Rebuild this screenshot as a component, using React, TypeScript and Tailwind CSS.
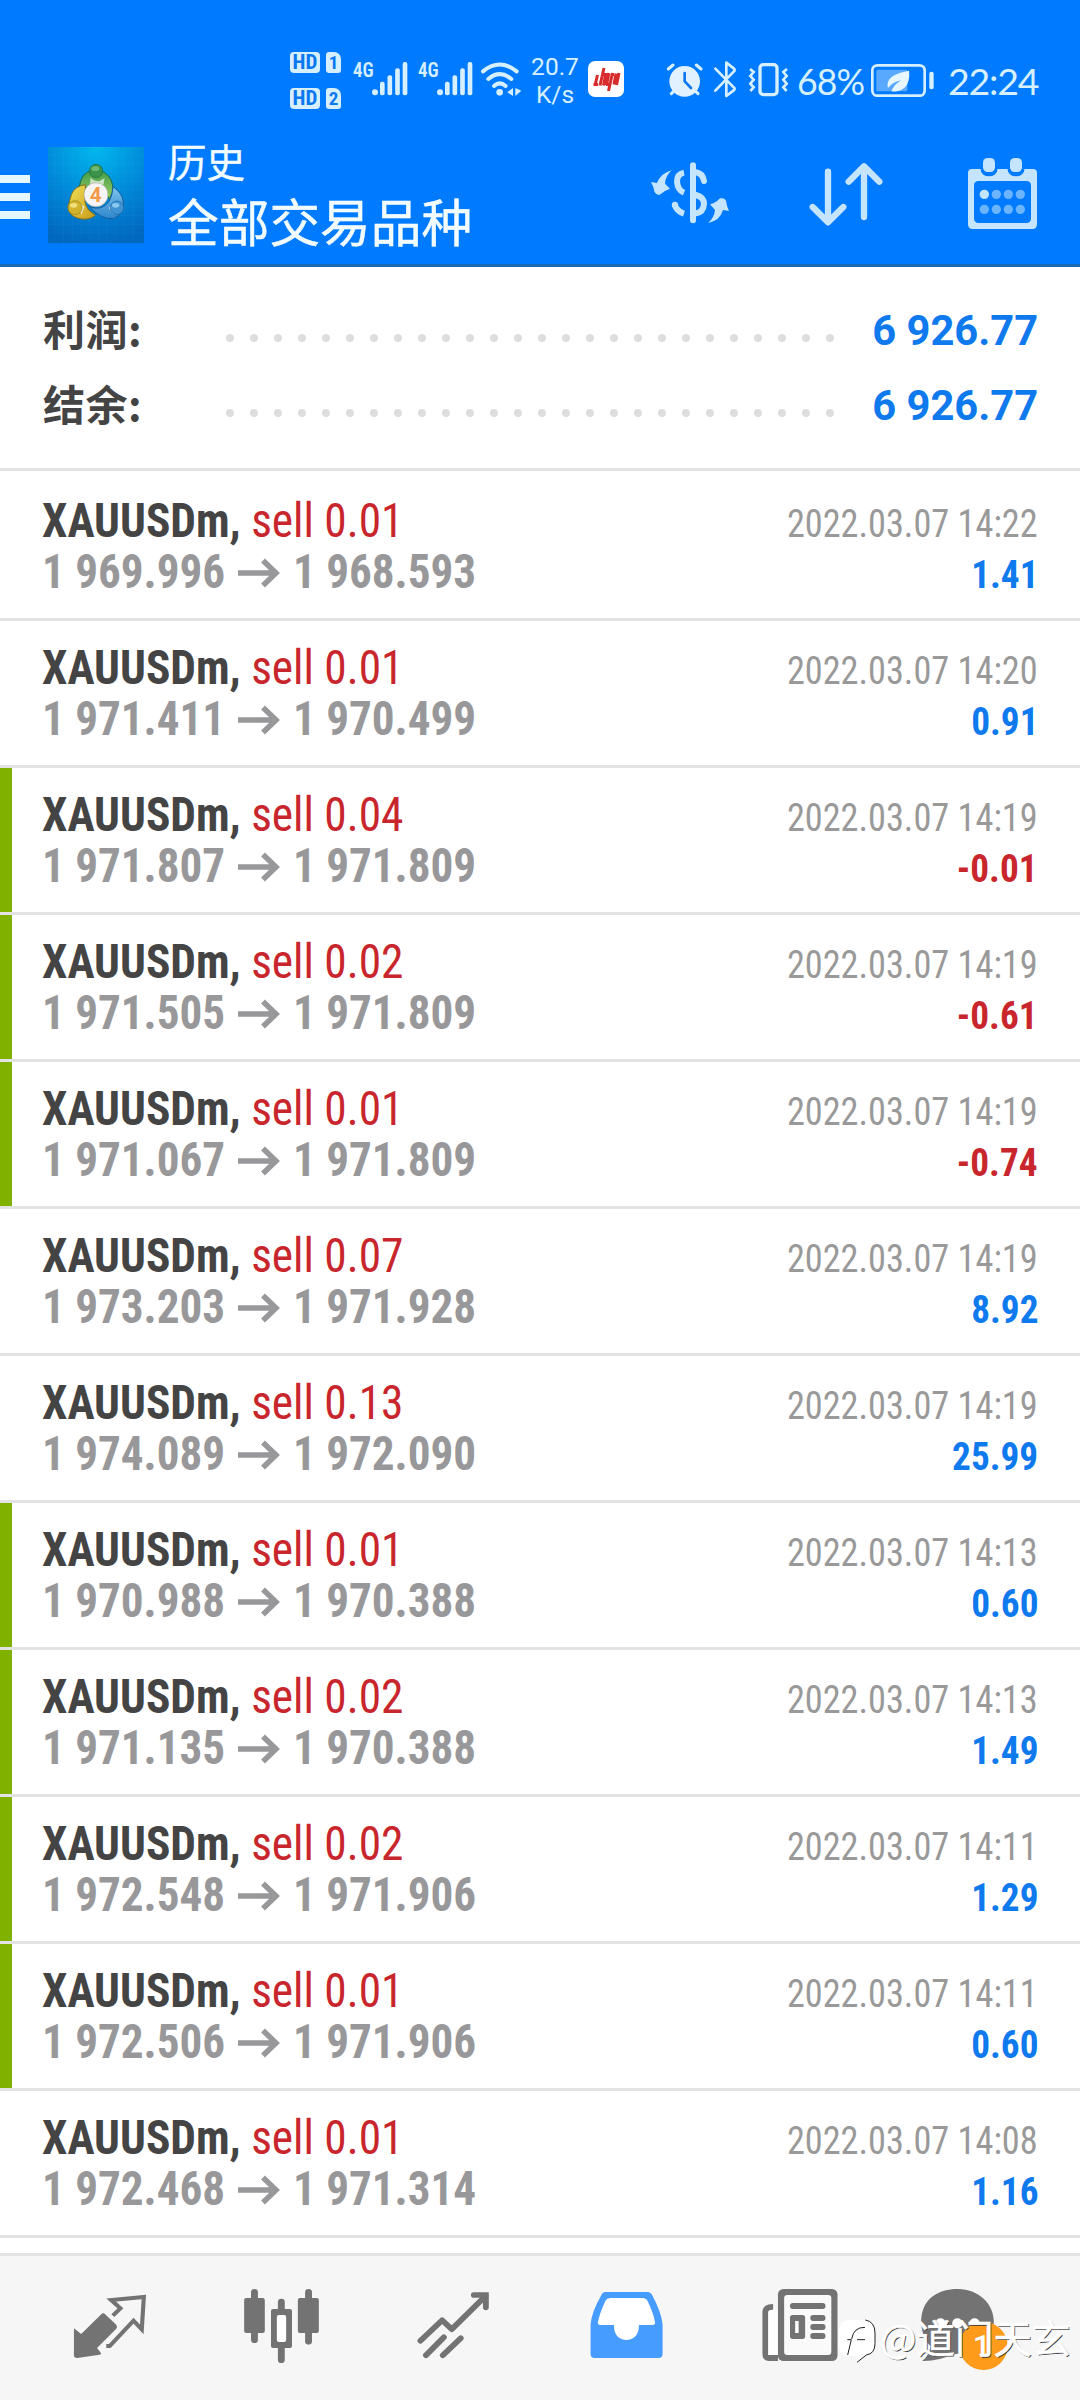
type Deal = {
  lot: string;
  from: string;
  to: string;
  time: string;
  profit: string;
  marked?: boolean;
};

const deals: Deal[] = [
  { lot: "0.01", from: "1 969.996", to: "1 968.593", time: "14:22", profit: "1.41" },
  { lot: "0.01", from: "1 971.411", to: "1 970.499", time: "14:20", profit: "0.91" },
  { lot: "0.04", from: "1 971.807", to: "1 971.809", time: "14:19", profit: "-0.01", marked: true },
  { lot: "0.02", from: "1 971.505", to: "1 971.809", time: "14:19", profit: "-0.61", marked: true },
  { lot: "0.01", from: "1 971.067", to: "1 971.809", time: "14:19", profit: "-0.74", marked: true },
  { lot: "0.07", from: "1 973.203", to: "1 971.928", time: "14:19", profit: "8.92" },
  { lot: "0.13", from: "1 974.089", to: "1 972.090", time: "14:19", profit: "25.99" },
  { lot: "0.01", from: "1 970.988", to: "1 970.388", time: "14:13", profit: "0.60", marked: true },
  { lot: "0.02", from: "1 971.135", to: "1 970.388", time: "14:13", profit: "1.49", marked: true },
  { lot: "0.02", from: "1 972.548", to: "1 971.906", time: "14:11", profit: "1.29", marked: true },
  { lot: "0.01", from: "1 972.506", to: "1 971.906", time: "14:11", profit: "0.60", marked: true },
  { lot: "0.01", from: "1 972.468", to: "1 971.314", time: "14:08", profit: "1.16" },
];

function HdBadge({ n }: { n: string }) {
  return (
    <div className="flex h-[22px] items-center gap-[6px] font-['Roboto_Condensed'] font-bold text-[#0a78f0]">
      <span className="flex h-[21px] w-[30px] items-center justify-center rounded-[4px] bg-[#d6efff] text-[21px] leading-[21px]">
        HD
      </span>
      <span className="flex h-[21px] w-[15px] items-center justify-center rounded-[3px] rounded-tr-[7px] bg-[#d6efff] text-[19px] leading-[21px]">
        {n}
      </span>
    </div>
  );
}

function Signal() {
  return (
    <div className="flex h-[34px] items-start">
      <span className="w-[19px] origin-left scale-x-[0.95] font-['Roboto_Condensed'] text-[20px] leading-[16px] font-semibold">
        4G
      </span>
      <svg className="h-[34px] w-[36px]" viewBox="302 98 108 102" fill="currentColor">
        <circle cx="311" cy="189" r="9" />
        <rect x="326" y="157" width="14" height="41" rx="6" />
        <rect x="348.500" y="138" width="14" height="60" rx="6" />
        <rect x="371.500" y="117" width="14" height="81" rx="6" />
        <rect x="394" y="98" width="14" height="100" rx="6" />
      </svg>
    </div>
  );
}

function StatusBar() {
  return (
    <div className="flex h-[130px] items-start text-[#d6f0ff]">
      <div className="mt-[51px] ml-[290px] flex w-[63px] shrink-0 flex-col gap-[14px]">
        <HdBadge n="1" />
        <HdBadge n="2" />
      </div>
      <div className="mt-[62px] w-[65px] shrink-0">
        <Signal />
      </div>
      <div className="mt-[62px] w-[62px] shrink-0">
        <Signal />
      </div>
      <svg className="mt-[62px] h-[36px] w-[44px] shrink-0" viewBox="632 96 132 108" fill="none" stroke="currentColor" strokeWidth="12" strokeLinecap="round">
        <path d="M641 124Q691 83 742 124" />
        <path d="M657 147Q691 118 726 147" />
        <path d="M674 168Q691 152 709 168" />
        <circle cx="691" cy="187" r="10" fill="currentColor" stroke="none" />
        <path d="M714 187L731 174V198ZM738 174L756 182 738 198Z" fill="currentColor" stroke="none" />
      </svg>
      <div className="mt-[53px] ml-[6px] flex w-[50px] shrink-0 flex-col items-center font-['Roboto'] text-[24.500px] leading-[28px]">
        <span>20.7</span>
        <span>K/s</span>
      </div>
      <svg className="mt-[61px] ml-[8px] h-[36px] w-[36px] shrink-0 rounded-[7px] bg-white" viewBox="0 0 36 36" fill="none" stroke="#d82b2b" strokeWidth="3">
        <path d="M7 24.500L9.500 14M5.500 23.500H10M12 24.500L16 7M15.500 24.500L18 12.500M14 13.500H21M18.500 24L21 12M20.500 30L24.500 12M18 23.500H23M26 23.500L28 12.500M28.500 24L31 12M23 13.500H26" />
      </svg>
      <svg className="mt-[62px] ml-[42px] h-[36px] w-[37px] shrink-0" viewBox="78 96 111 108" fill="none" stroke="currentColor" strokeWidth="9" strokeLinecap="round">
        <circle cx="134" cy="154" r="46" fill="#e2f1ff" stroke="none" />
        <path d="M85 117L99 105M183 117L169 105" />
        <path d="M101 184L94 191M167 184L174 191" />
        <path d="M134 129V154L153 174" stroke="#0a78f0" strokeWidth="8" />
      </svg>
      <svg className="mt-[60px] ml-[10px] h-[40px] w-[25px] shrink-0" viewBox="219 90 75 120" fill="none" stroke="currentColor" strokeWidth="8" strokeLinejoin="round" strokeLinecap="round">
        <path d="M226 116L281 172Q287 177 281 181L259 198V98L281 115Q287 120 281 125L226 182" />
      </svg>
      <svg className="mt-[61px] ml-[10px] h-[38px] w-[42px] shrink-0" viewBox="324 92 126 114" fill="none" stroke="currentColor" strokeWidth="8">
        <rect x="360" y="103" width="51" height="90" rx="10" strokeWidth="10" />
        <path d="M330 116L341 125 331 137 341 148 331 160 341 171 331 182M441 116L430 125 440 137 430 148 440 160 430 171 440 182" strokeWidth="8" />
      </svg>
      <span className="mt-[60px] ml-[7px] w-[74px] shrink-0 origin-left scale-x-[0.95] font-['Lato'] text-[37.500px] leading-[42px] tracking-[-1px]">
        68%
      </span>
      <svg className="mt-[63px] h-[36px] w-[64px] shrink-0" viewBox="697 99 192 108" fill="none">
        <rect x="701" y="106" width="157" height="91" rx="15" stroke="currentColor" strokeWidth="8" />
        <rect x="713" y="119" width="93" height="65" rx="5" fill="#58a9ff" />
        <rect x="872" y="125" width="13" height="53" rx="6" fill="currentColor" />
        <path d="M748 174C740 140 777 129 811 122C815 156 802 188 758 184C767 165 776 157 789 151C770 154 757 162 748 174Z" fill="#e8f6ff" />
      </svg>
      <span className="mt-[60px] ml-[13px] shrink-0 origin-left font-['Lato'] text-[37.500px] leading-[42px] tracking-[-1.200px]">
        22:24
      </span>
    </div>
  );
}

function AppLogo() {
  return (
    <svg className="h-24 w-24" viewBox="24 21 288 288">
      <defs>
        <radialGradient id="sky" cx="0.5" cy="0" r="1">
          <stop offset="0" stopColor="#00b8ee" />
          <stop offset="0.55" stopColor="#0088d8" />
          <stop offset="1" stopColor="#0068bf" />
        </radialGradient>
        <linearGradient id="green" x1="0" y1="0" x2="0" y2="1">
          <stop offset="0" stopColor="#3f9a50" />
          <stop offset="1" stopColor="#9cd05c" />
        </linearGradient>
        <linearGradient id="gold" x1="0" y1="0" x2="1" y2="1">
          <stop offset="0" stopColor="#f2e259" />
          <stop offset="1" stopColor="#c99a18" />
        </linearGradient>
        <linearGradient id="azure" x1="0" y1="0" x2="0" y2="1">
          <stop offset="0" stopColor="#7cc4ee" />
          <stop offset="1" stopColor="#2f86cc" />
        </linearGradient>
      </defs>
      <rect x="24" y="21" width="288" height="288" fill="url(#sky)" />
      <path
        d="M45 21V309M71 21V309M97 21V309M123 21V309M149 21V309M175 21V309M201 21V309M227 21V309M253 21V309M279 21V309M24 45H312M24 71H312M24 97H312M24 123H312M24 149H312M24 175H312M24 201H312M24 227H312M24 253H312M24 279H312"
        stroke="#5fc3ff"
        strokeOpacity="0.12"
        strokeWidth="2"
      />
      <path d="M118 140Q124 100 152 92Q182 84 204 106Q219 122 219 152L208 178 194 150Q170 116 144 142Z" fill="url(#green)" stroke="#1d6b4a" strokeWidth="3" />
      <path d="M136 134Q104 138 94 164L84 200Q86 226 112 234Q144 244 166 226L146 210Q130 190 136 160Z" fill="url(#gold)" stroke="#83701c" strokeWidth="3" />
      <path d="M219 140Q248 160 250 186Q254 222 220 236Q184 240 148 200Q184 214 206 186Q218 166 219 140Z" fill="url(#azure)" stroke="#135c99" strokeWidth="3" />
      <path d="M152 112Q158 124 178 124L194 114L190 134H150ZM112 184L134 200 124 224ZM206 204L222 186 220 222Z" fill="#eef6ec" fillOpacity="0.75" />
      <circle cx="168" cy="93" r="20" fill="#3c9248" stroke="#1d6b3c" strokeWidth="2" />
      <ellipse cx="166" cy="86" rx="12" ry="7" fill="#86c98a" fillOpacity="0.7" />
      <circle cx="105" cy="203" r="21" fill="#d3b22c" stroke="#94801c" strokeWidth="2" />
      <ellipse cx="101" cy="196" rx="11" ry="7" fill="#f7ec94" fillOpacity="0.8" />
      <circle cx="231" cy="203" r="20" fill="#3f93d2" stroke="#1a66a4" strokeWidth="2" />
      <ellipse cx="227" cy="196" rx="11" ry="7" fill="#9fd6f7" fillOpacity="0.8" />
      <circle cx="168" cy="164" r="36" fill="#f6f4f6" stroke="#a6ab98" strokeWidth="2" />
      <text x="167" y="186" textAnchor="middle" fontFamily="Roboto" fontWeight="700" fontSize="62" fill="#f39a4a">
        4
      </text>
    </svg>
  );
}

function Header() {
  return (
    <header className="h-[267px] shrink-0 border-b-[3px] border-[#1c69b4] bg-[#007bff]">
      <StatusBar />
      <div className="flex items-start text-[#f2fcff]">
        <div className="mt-[45px] flex w-[30px] flex-col gap-[10px]">
          <span className="h-2 bg-[#e6f8ff]" />
          <span className="h-2 bg-[#e6f8ff]" />
          <span className="h-2 bg-[#e6f8ff]" />
        </div>
        <div className="mt-[17px] ml-[18px]">
          <AppLogo />
        </div>
        <div className="ml-[24px] flex w-[452px] shrink-0 flex-col font-['Noto_Sans_CJK_SC',sans-serif]">
          <span className="mt-[8px] text-[38.500px] leading-[44px] [-webkit-text-stroke:0.4px_#f2fcff]">历史</span>
          <span className="mt-[10px] text-[50.700px] leading-[56px] [-webkit-text-stroke:0.5px_#f2fcff]">全部交易品种</span>
        </div>
        <svg className="h-[120px] w-[460px] shrink-0" viewBox="0 0 1380 360" fill="none" stroke="#c5e5ff" strokeLinecap="round">
          <g fill="#c5e5ff" stroke="none">
            <path d="M155 121Q136 138 135 161L150 176Q134 181 118 195Q106 194 103 184Q101 170 93 156L111 159Q122 130 155 121Z" />
            <path d="M264 279Q282 265 285 240L270 223Q286 220 300 205Q314 203 318 212Q320 228 327 243L309 240Q300 272 264 279Z" />
          </g>
          <path d="M219 106V271" strokeWidth="18" />
          <path d="M192 128Q171 132 171 155Q173 180 192 188M164 224Q170 244 192 251" strokeWidth="18" strokeLinecap="butt" />
          <circle cx="165" cy="225" r="9.500" fill="#c5e5ff" stroke="none" />
          <path d="M228 127Q248 130 252 153M228 195Q252 201 252 222Q250 247 228 250" strokeWidth="18" />
          <path d="M624 125V276M578 231L624 277 670 231M732 261V110M686 155L732 109 778 155" strokeWidth="19" strokeLinejoin="round" />
          <path d="M1056 117H1082V120A25 19 0 0 0 1132 120V117H1163V120A25 19 0 0 0 1213 120V117H1239Q1251 117 1251 129V283Q1251 297 1237 297H1058Q1044 297 1044 283V129Q1044 117 1056 117ZM1076 153Q1062 153 1062 167V265Q1062 279 1076 279H1219Q1233 279 1233 265V167Q1233 153 1219 153Z" fill="#c5e5ff" fillRule="evenodd" stroke="none" />
          <g fill="#c5e5ff" stroke="none">
            <rect x="1089" y="84" width="36" height="42" rx="14" />
            <rect x="1170" y="84" width="36" height="42" rx="14" />
            <circle cx="1093" cy="193" r="14" />
          </g>
          <g fill="#6bb4ff" stroke="none">
            <circle cx="1129" cy="193" r="14" />
            <circle cx="1165" cy="193" r="14" />
            <circle cx="1201" cy="193" r="14" />
            <circle cx="1093" cy="238" r="14" />
            <circle cx="1129" cy="238" r="14" />
            <circle cx="1165" cy="238" r="14" />
            <circle cx="1201" cy="238" r="14" />
          </g>
        </svg>
      </div>
    </header>
  );
}

function SummaryLine({ label, value }: { label: string; value: string }) {
  return (
    <div className="flex h-[75px] items-center">
      <span className="-mt-[6px] w-[183px] font-['Noto_Sans_CJK_SC',sans-serif] text-[42px] leading-[75px] font-bold tracking-[0.500px] text-[#444]">
        {label}
      </span>
      <div className="mt-[15px] flex gap-4">
        {Array.from({ length: 26 }, (_, i) => (
          <span key={i} className="size-2 rounded-full bg-[#dedede]" />
        ))}
      </div>
      <span className="ml-auto origin-right scale-x-[0.993] font-['Roboto'] text-[42px] leading-[75px] font-bold text-[#0f79ee]">
        {value}
      </span>
    </div>
  );
}

function DealRow({ deal, first }: { deal: Deal; first: boolean }) {
  return (
    <div
      className={`flex border-b-[3px] border-[#e3e3e3] font-['Roboto_Condensed'] ${first ? "h-[150px] pt-[3px]" : "h-[147px]"}`}
    >
      <div className={`w-3 shrink-0 ${deal.marked ? "bg-[#80b000]" : ""}`} />
      <div className="flex flex-1 flex-col pt-[21px] pr-[42px] pl-[30px] text-[48px] leading-[51px]">
        <div className="flex h-[51px] items-baseline justify-between">
          <span className="origin-left scale-x-[0.945] whitespace-nowrap">
            <span className="font-bold text-[#444]">XAUUSDm,</span>{" "}
            <span className="text-[#c8262c]">sell {deal.lot}</span>
          </span>
          <span className="origin-right scale-x-[0.93] text-[39px] leading-[51px] text-[#999]">
            2022.03.07 {deal.time}
          </span>
        </div>
        <div className="flex h-[51px] items-baseline justify-between">
          <div className="flex h-[51px] items-baseline font-bold text-[#98989a]">
            <span className="w-[196px] origin-left scale-x-[0.94] whitespace-nowrap">{deal.from}</span>
            <svg className="mt-[3px] h-[30px] w-[42px] self-center" viewBox="0 0 42 30" fill="none" stroke="currentColor" strokeWidth="5.500">
              <path d="M0 15H38M25 2.500L38 15 25 27.500" />
            </svg>
            <span className="ml-[13px] origin-left scale-x-[0.94] whitespace-nowrap">{deal.to}</span>
          </div>
          <span
            className={`origin-right scale-x-[0.955] text-[39px] leading-[51px] font-bold ${
              deal.profit.startsWith("-") ? "text-[#c8262c]" : "text-[#0f79ee]"
            }`}
          >
            {deal.profit}
          </span>
        </div>
      </div>
    </div>
  );
}

const tabSvg = "h-[144px] w-[172px]";

function TabBar() {
  return (
    <nav className="relative flex h-[147px] shrink-0 border-t-[3px] border-[#e3e3e3] bg-[#f6f6f6] pl-6">
      <svg className={tabSvg} viewBox="70 108 499.500 432" preserveAspectRatio="none" fill="#737373">
        <path d="M215 325L236 342 293 284Q300 276 307 284L338 314Q342 320 338 326L282 384 294 400Q294 403 290 404L224 414Q215 414 215 406Z" />
        <path d="M328 287L350 265 323 240 418 231 412 328 388 302 319 378H309" fill="none" stroke="#737373" strokeWidth="12" />
      </svg>
      <svg className={tabSvg} viewBox="569.200 108 499.500 432" preserveAspectRatio="none" fill="#737373">
        <rect x="709" y="234" width="60" height="105" rx="6" />
        <rect x="729" y="207" width="20" height="162" rx="10" />
        <rect x="865" y="234" width="61" height="105" rx="6" />
        <rect x="886" y="207" width="20" height="167" rx="10" />
        <rect x="787" y="267" width="61" height="117" rx="6" />
        <rect x="807" y="236" width="20" height="193" rx="10" />
        <rect x="804" y="285" width="27" height="81" rx="6" fill="#fff" />
      </svg>
      <svg className={tabSvg} viewBox="1068.700 108 499.500 432" preserveAspectRatio="none" fill="none" stroke="#737373" strokeWidth="17" strokeLinecap="round" strokeLinejoin="round">
        <path d="M1221 362L1284 301 1312 328 1410 228" />
        <path d="M1376 225H1411V262" strokeLinejoin="miter" />
        <path d="M1237 406L1289 352M1286 406L1338 355" />
      </svg>
      <svg className={tabSvg} viewBox="0 108 499.500 432" preserveAspectRatio="none">
        <path d="M190 216H312Q321 216 326 226Q352 276 356 313V402Q356 414 344 414H159Q147 414 147 402V313Q150 276 178 226Q182 216 190 216Z" fill="#469cff" />
        <path d="M204 234H297Q308 234 312 242Q330 280 334 307Q335 315 327 315H287V323C284 372 218 372 215 323V315H175Q167 315 168 307Q173 280 190 242Q194 234 204 234Z" fill="#fff" />
      </svg>
      <svg className={tabSvg} viewBox="499.500 108 499.500 432" preserveAspectRatio="none" fill="#737373">
        <path d="M677 252V269Q663 269 663 277V405H691V423H665Q646 423 646 402V277Q646 252 677 252Z" />
        <path d="M663 277Q663 269 677 269H691V405H663Z" fill="#fff" />
        <rect x="691" y="207" width="173" height="216" rx="16" />
        <rect x="709" y="225" width="137" height="180" rx="9" fill="#fafafa" />
        <rect x="726" y="249" width="103" height="18" rx="8" />
        <rect x="726" y="285" width="44" height="72" rx="8" />
        <rect x="741" y="303" width="10" height="36" fill="#fff" />
        <rect x="785" y="285" width="44" height="18" rx="8" />
        <rect x="785" y="312" width="44" height="18" rx="8" />
        <rect x="785" y="339" width="44" height="18" rx="8" />
      </svg>
      <svg className={tabSvg} viewBox="999 108 499.500 432" preserveAspectRatio="none">
        <path d="M1214 207C1272 207 1318 250 1318 306C1318 362 1272 404 1200 402Q1158 424 1110 423Q1132 404 1134 378C1090 330 1090 207 1214 207Z" fill="#737373" />
        <g fill="#fff">
          <circle cx="1163" cy="310" r="15" />
          <circle cx="1212" cy="310" r="15" />
          <circle cx="1262" cy="310" r="15" />
        </g>
        <ellipse cx="1288" cy="378" rx="70" ry="72" fill="#ff9b1a" />
        <text x="1283" y="412" textAnchor="middle" fontFamily="Roboto" fontWeight="500" fontSize="92" fill="#fff">
          1
        </text>
      </svg>
      <div className="absolute top-[51px] left-[839px] flex items-center text-white">
        <svg className="mt-[11px] h-[46px] w-[44px] shrink-0" viewBox="30 115 132 138" fill="none">
          <path d="M30 155Q30 121 62 121H108Q138 121 138 158V196Q138 222 112 226L84 248V229H62Q30 229 30 196Z" fill="#fff" />
          <path d="M109 121Q138 126 138 160V192Q138 222 112 226L84 248M56 226L67 180H55M68 178Q74 142 108 143M84 180H108" stroke="#222" strokeWidth="3" />
        </svg>
        <span className="-ml-[3px] font-['Noto_Sans_CJK_SC',sans-serif] text-[38.500px] leading-[50px] whitespace-nowrap [text-shadow:1px_1px_0_#333] [-webkit-text-stroke:0.6px_#fff]">
          @道门天玄
        </span>
      </div>
    </nav>
  );
}

export default function App() {
  return (
    <div className="flex h-[2400px] w-[1080px] flex-col overflow-hidden bg-white">
      <Header />
      <section className="flex h-[204px] shrink-0 flex-col border-b-[3px] border-[#e3e3e3] pt-[26px] pr-[42px] pl-[43px]">
        <SummaryLine label="利润:" value="6 926.77" />
        <SummaryLine label="结余:" value="6 926.77" />
      </section>
      <main className="flex-1">
        {deals.map((d, i) => (
          <DealRow key={i} deal={d} first={i === 0} />
        ))}
      </main>
      <TabBar />
    </div>
  );
}
